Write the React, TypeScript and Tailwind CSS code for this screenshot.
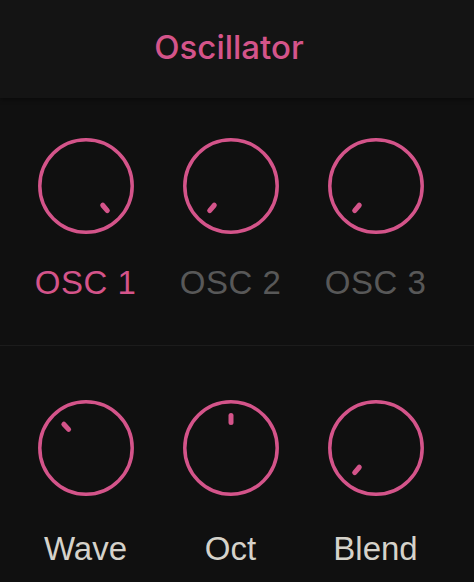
const PINK = "#d4548a";

type KnobProps = { angle: number };

// simple outline knob, angle in degrees clockwise from 12 o'clock
function Knob({ angle }: KnobProps) {
  const rad = (angle * Math.PI) / 180;
  const x1 = 48 + Math.sin(rad) * 25.5;
  const y1 = 48 - Math.cos(rad) * 25.5;
  const x2 = 48 + Math.sin(rad) * 32.5;
  const y2 = 48 - Math.cos(rad) * 32.5;
  return (
    <svg width="96" height="96" viewBox="0 0 96 96" className="block">
      <circle cx="48" cy="48" r="46.2" fill="none" stroke={PINK} strokeWidth="3.5" />
      <line x1={x1} y1={y1} x2={x2} y2={y2} stroke={PINK} strokeWidth="5" strokeLinecap="round" />
    </svg>
  );
}

const oscs = [
  { label: "OSC 1", angle: 139, active: true },
  { label: "OSC 2", angle: 221, active: false },
  { label: "OSC 3", angle: 221, active: false },
];

const params = [
  { label: "Wave", angle: 317 },
  { label: "Oct", angle: 0 },
  { label: "Blend", angle: 221 },
];

export default function App() {
  return (
    <div className="w-[474px] h-[582px] bg-[#101010] overflow-hidden">
      {/* Header */}
      <div className="h-[98px] bg-[#141414] flex items-center justify-center pr-[16px] shadow-[0_2px_4px_rgba(0,0,0,0.35)] relative">
        <h1 className="text-[33px] leading-none font-medium text-[#d4548a] font-['Inter',sans-serif] pb-1">
          Oscillator
        </h1>
      </div>

      {/* Oscillator selectors */}
      <div className="pt-[40px] pb-[46px] pl-[13px] border-b border-[#1c1c1c]">
        <div className="grid grid-cols-[145px_145px_145px]">
          {oscs.map((o) => (
            <div key={o.label} className="flex flex-col items-center">
              <Knob angle={o.angle} />
              <span
                className={`mt-[32px] text-[33px] leading-none tracking-[0.5px] font-['Liberation_Sans',Arial,sans-serif] ${
                  o.active ? "text-[#d4548a]" : "text-[#585858]"
                }`}
              >
                {o.label}
              </span>
            </div>
          ))}
        </div>
      </div>

      {/* Parameters */}
      <div className="pt-[54px] pl-[13px]">
        <div className="grid grid-cols-[145px_145px_145px]">
          {params.map((p) => (
            <div key={p.label} className="flex flex-col items-center">
              <Knob angle={p.angle} />
              <span className="mt-[36px] text-[33px] leading-none text-[#d5d2ca] font-['Liberation_Sans',Arial,sans-serif]">
                {p.label}
              </span>
            </div>
          ))}
        </div>
      </div>
    </div>
  );
}
